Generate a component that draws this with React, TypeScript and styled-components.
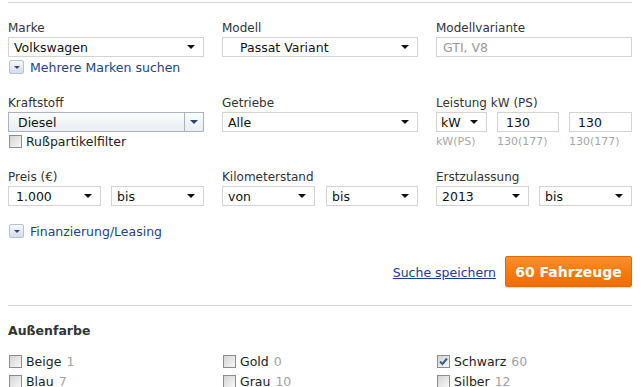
import React from 'react';
import styled, { createGlobalStyle } from 'styled-components';

const GlobalStyle = createGlobalStyle`
  body {
    margin: 0;
    background: #fff;
    font-family: "DejaVu Sans", Verdana, sans-serif;
    color: #333;
  }
`;

const Page = styled.div`
  width: 624px;
  padding: 0 8px;
`;

const Rule = styled.div<{ top: number }>`
  margin-top: ${({ top }) => top}px;
  border-top: 1px solid #d4d4d4;
`;

const Row = styled.div<{ top: number }>`
  display: grid;
  grid-template-columns: repeat(3, 196px);
  column-gap: 18px;
  margin-top: ${({ top }) => top}px;
`;

const Field = styled.div`
  display: flex;
  flex-direction: column;
`;

const Label = styled.div`
  height: 17px;
  font-size: 12px;
  line-height: 16px;
  color: #333;
`;

const Pair = styled.div`
  display: flex;
  justify-content: space-between;
`;

const SelectBox = styled.div<{ width?: number; indent?: number }>`
  box-sizing: border-box;
  display: flex;
  align-items: center;
  width: ${({ width }) => (width ? `${width}px` : '100%')};
  height: 20px;
  padding: 0 0 0 ${({ indent }) => indent ?? 5}px;
  border: 1px solid #d3d3d3;
  background: #fff;
  font-size: 12.5px;
  color: #111;
`;

const SelectText = styled.span`
  flex: 1;
  white-space: nowrap;
`;

const Arrow = styled.span`
  width: 0;
  height: 0;
  margin-right: 8px;
  border-left: 4px solid transparent;
  border-right: 4px solid transparent;
  border-top: 4px solid #111;
`;

const ComboBox = styled.div`
  box-sizing: border-box;
  display: flex;
  align-items: stretch;
  width: 100%;
  height: 20px;
  border: 1px solid #a9b2bd;
  background: linear-gradient(#fbfcfd, #e9edf1);
  font-size: 12.5px;
  color: #111;
`;

const ComboText = styled.span`
  flex: 1;
  display: flex;
  align-items: center;
  padding-left: 9px;
`;

const ComboButton = styled.span`
  width: 18px;
  display: flex;
  align-items: center;
  justify-content: center;
  border-left: 1px solid #a9b2bd;
`;

const ComboArrow = styled.span`
  width: 0;
  height: 0;
  border-left: 4px solid transparent;
  border-right: 4px solid transparent;
  border-top: 4px solid #2d4468;
`;

const TextInput = styled.div<{ width?: number; muted?: boolean }>`
  box-sizing: border-box;
  display: flex;
  align-items: center;
  width: ${({ width }) => (width ? `${width}px` : '100%')};
  height: 20px;
  padding-left: ${({ muted }) => (muted ? 6 : 8)}px;
  border: 1px solid #d3d3d3;
  background: #fff;
  font-size: 12.5px;
  color: ${({ muted }) => (muted ? '#9a9a9a' : '#111')};
`;

const PowerRow = styled.div`
  display: flex;
  gap: 10px;
`;

const HintRow = styled.div`
  display: flex;
  gap: 10px;
  margin-top: 3px;
`;

const Hint = styled.span<{ width: number }>`
  width: ${({ width }) => width}px;
  font-size: 11px;
  color: #a6a6a6;
  white-space: nowrap;
`;

const Toggle = styled.div<{ top?: number }>`
  display: flex;
  align-items: center;
  gap: 6px;
  height: 16px;
  margin-top: ${({ top }) => top ?? 2}px;
  padding-left: 1px;
  font-size: 12.5px;
  color: #23437a;
  white-space: nowrap;
`;

const ToggleIcon = styled.span`
  box-sizing: border-box;
  display: flex;
  align-items: center;
  justify-content: center;
  width: 15px;
  height: 14px;
  border: 1px solid #b7c1cf;
  border-radius: 2px;
  background: linear-gradient(#f7f9fb, #d6dde7);

  &::after {
    content: '';
    border-left: 3px solid transparent;
    border-right: 3px solid transparent;
    border-top: 3px solid #2f4a78;
  }
`;

const CheckRow = styled.label<{ top?: number }>`
  display: flex;
  align-items: center;
  gap: 4px;
  height: 16px;
  margin-top: ${({ top }) => top ?? 0}px;
  padding-left: 1px;
  font-size: 12.5px;
  color: #222;
  white-space: nowrap;
`;

const Box = styled.span`
  box-sizing: border-box;
  width: 13px;
  height: 13px;
  border: 1px solid #8d8d8d;
  background: linear-gradient(135deg, #d4d4d4, #f7f7f7);
  display: flex;
  align-items: center;
  justify-content: center;
`;

const Count = styled.span`
  color: #a2a2a2;
  margin-left: 1px;
`;

const Actions = styled.div`
  display: flex;
  justify-content: flex-end;
  align-items: center;
  gap: 9px;
  margin-top: 17px;
`;

const SaveLink = styled.a`
  font-size: 12.5px;
  color: #1f3a93;
  text-decoration: underline;
  margin-top: 1px;
`;

const ResultButton = styled.button`
  box-sizing: border-box;
  width: 127px;
  height: 31px;
  border: 1px solid #de6a06;
  border-radius: 2px;
  background: linear-gradient(#fb8e2c, #f47a10 55%, #f06d02);
  color: #fff;
  font-family: "DejaVu Sans", Verdana, sans-serif;
  font-weight: bold;
  font-size: 14px;
  padding: 0;
  box-shadow: 0 1px 1px rgba(0, 0, 0, 0.15);
`;

const SectionTitle = styled.div`
  margin-top: 17px;
  height: 16px;
  font-size: 12.5px;
  font-weight: bold;
  color: #333;
`;

const ColorGrid = styled.div`
  display: grid;
  grid-template-columns: repeat(3, 196px);
  column-gap: 18px;
  row-gap: 4px;
  margin-top: 14px;
`;

const Checkbox: React.FC<{ checked?: boolean }> = ({ checked }) => (
  <Box>
    {checked && (
      <svg width="9" height="9" viewBox="0 0 9 9">
        <path d="M1 4.5 L3.5 7 L8 1.5" fill="none" stroke="#3a5a9c" strokeWidth="2" />
      </svg>
    )}
  </Box>
);

const Select: React.FC<{ value: string; width?: number; indent?: number }> = ({ value, width, indent }) => (
  <SelectBox width={width} indent={indent}>
    <SelectText>{value}</SelectText>
    <Arrow />
  </SelectBox>
);

const COLORS = [
  { name: 'Beige', count: 1 },
  { name: 'Gold', count: 0 },
  { name: 'Schwarz', count: 60, checked: true },
  { name: 'Blau', count: 7 },
  { name: 'Grau', count: 10 },
  { name: 'Silber', count: 12 },
];

const App: React.FC = () => (
  <Page>
    <GlobalStyle />
    <Rule top={2} />

    <Row top={17}>
      <Field>
        <Label>Marke</Label>
        <Select value="Volkswagen" />
        <Toggle>
          <ToggleIcon />
          Mehrere Marken suchen
        </Toggle>
      </Field>
      <Field>
        <Label>Modell</Label>
        <Select value="Passat Variant" indent={17} />
      </Field>
      <Field>
        <Label>Modellvariante</Label>
        <TextInput muted>GTI, V8</TextInput>
      </Field>
    </Row>

    <Row top={20}>
      <Field>
        <Label>Kraftstoff</Label>
        <ComboBox>
          <ComboText>Diesel</ComboText>
          <ComboButton>
            <ComboArrow />
          </ComboButton>
        </ComboBox>
        <CheckRow top={1}>
          <Checkbox />
          Rußpartikelfilter
        </CheckRow>
      </Field>
      <Field>
        <Label>Getriebe</Label>
        <Select value="Alle" />
      </Field>
      <Field>
        <Label>Leistung kW (PS)</Label>
        <PowerRow>
          <Select value="kW" width={51} indent={4} />
          <TextInput width={62}>130</TextInput>
          <TextInput width={63}>130</TextInput>
        </PowerRow>
        <HintRow>
          <Hint width={51}>kW(PS)</Hint>
          <Hint width={62}>130(177)</Hint>
          <Hint width={63}>130(177)</Hint>
        </HintRow>
      </Field>
    </Row>

    <Row top={20}>
      <Field>
        <Label>Preis (€)</Label>
        <Pair>
          <Select value="1.000" width={93} indent={7} />
          <Select value="bis" width={93} />
        </Pair>
        <Toggle top={17}>
          <ToggleIcon />
          Finanzierung/Leasing
        </Toggle>
      </Field>
      <Field>
        <Label>Kilometerstand</Label>
        <Pair>
          <Select value="von" width={93} />
          <Select value="bis" width={92} />
        </Pair>
      </Field>
      <Field>
        <Label>Erstzulassung</Label>
        <Pair>
          <Select value="2013" width={93} />
          <Select value="bis" width={93} />
        </Pair>
      </Field>
    </Row>

    <Actions>
      <SaveLink href="#">Suche speichern</SaveLink>
      <ResultButton>60 Fahrzeuge</ResultButton>
    </Actions>

    <Rule top={18} />

    <SectionTitle>Außenfarbe</SectionTitle>

    <ColorGrid>
      {COLORS.map(({ name, count, checked }) => (
        <CheckRow key={name}>
          <Checkbox checked={checked} />
          {name}
          <Count>{count}</Count>
        </CheckRow>
      ))}
    </ColorGrid>
  </Page>
);

export default App;
